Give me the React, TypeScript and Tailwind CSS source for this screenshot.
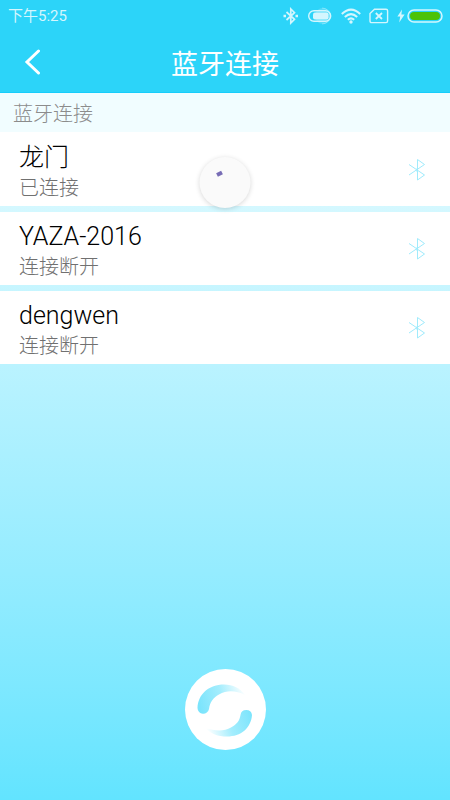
type Device = { name: string; status: string };

const devices: Device[] = [
  { name: "龙门", status: "已连接" },
  { name: "YAZA-2016", status: "连接断开" },
  { name: "dengwen", status: "连接断开" },
];

function StatusBar() {
  return (
    <div className="flex h-8 items-center justify-between pr-[7px] pl-2 text-[#d4f6fe]">
      <span className="text-[15px] leading-5">下午5:25</span>
      <div className="flex items-center">
        <svg width="16" height="18" viewBox="0 0 16 18" fill="none" stroke="currentColor" strokeWidth="1.7" aria-hidden="true">
          <path d="M3.5 5 L11.5 12.3 L7.8 16 V2 L11.5 5.7 L3.5 13" />
          <path d="M.5 9 h2.500 M12.500 9 h2.500" strokeWidth="2.4" />
        </svg>
        <svg className="ml-2" width="26" height="18" viewBox="0 0 26 18" fill="none" aria-hidden="true">
          <circle cx="16" cy="9" r="8" fill="#fff" opacity=".2" />
          <path d="M15 1 A8 8 0 0 1 15 17" stroke="#fff" opacity=".3" />
          <rect x="1.7" y="3.7" width="22" height="10.6" rx="5.3" stroke="currentColor" strokeWidth="1.4" />
          <rect x="6" y="5.5" width="15.5" height="7" rx="2" fill="currentColor" />
        </svg>
        <svg className="ml-2" width="20" height="16" viewBox="0 0 20 16" fill="none" stroke="currentColor" strokeWidth="2" aria-hidden="true">
          <path d="M.8 6 Q10 -2.8 19.2 6" />
          <path d="M3.8 9 Q10 3.3 16.2 9" />
          <path d="M6.8 11.7 Q10 9 13.2 11.7" />
          <circle cx="10" cy="14" r="1.7" fill="currentColor" stroke="none" />
        </svg>
        <svg className="ml-2" width="20" height="16" viewBox="0 0 20 16" fill="none" stroke="currentColor" strokeWidth="1.4" aria-hidden="true">
          <path d="M5.5 1.2 H17 Q18.6 1.2 18.6 2.8 V13 Q18.6 14.6 17 14.6 H2.6 Q1 14.6 1 13 V5.5 Z" />
          <path d="M6.8 5 L13 11 M13 5 L6.8 11" strokeWidth="1.8" />
        </svg>
        <svg className="ml-2" width="8" height="14" viewBox="0 0 8 14" fill="currentColor" aria-hidden="true">
          <path d="M5 0.5 L0.4 7.6 H3.2 L2.2 13.5 L7.6 5.6 H4.4 Z" />
        </svg>
        <svg className="ml-0.5" width="36" height="14" viewBox="0 0 36 14" aria-hidden="true">
          <rect x="1" y="1" width="34" height="12" rx="6" fill="none" stroke="currentColor" strokeWidth="1.5" />
          <rect x="3" y="3" width="30" height="8" rx="4" fill="#4cc208" />
        </svg>
      </div>
    </div>
  );
}

function BluetoothIcon() {
  return (
    <svg width="18" height="24" viewBox="0 0 18 24" fill="none" stroke="#a0ebfc" strokeWidth="1" aria-hidden="true">
      <path d="M1 6.5 L16.5 17 L9.5 22 V1.5 L16.5 6.5 L1 17" />
      <path d="M9 10.5 v3" strokeWidth="1.5" />
    </svg>
  );
}

function DeviceRow({ name, status }: Device) {
  return (
    <li>
      <button type="button" className="flex h-[73px] w-full items-center justify-between bg-white pr-6 pl-[19px] text-left">
        <span className="flex flex-col pt-1">
          <span className="text-[25px] leading-8 text-black">{name}</span>
          <span className="text-[20px] leading-7 text-[#707070]">{status}</span>
        </span>
        <BluetoothIcon />
      </button>
    </li>
  );
}

function RefreshIcon() {
  return (
    <svg width="81" height="81" viewBox="0 0 81 81" aria-hidden="true">
      <defs>
        <linearGradient id="swooshTop" x1="14" y1="36" x2="60" y2="22" gradientUnits="userSpaceOnUse">
          <stop offset="0" stopColor="#7be4fc" />
          <stop offset=".5" stopColor="#a3edfd" />
          <stop offset="1" stopColor="#fff" />
        </linearGradient>
        <linearGradient id="swooshBottom" x1="67" y1="45" x2="21" y2="59" gradientUnits="userSpaceOnUse">
          <stop offset="0" stopColor="#7be4fc" />
          <stop offset=".5" stopColor="#a3edfd" />
          <stop offset="1" stopColor="#fff" />
        </linearGradient>
      </defs>
      <circle cx="40.5" cy="40.5" r="40.5" fill="#fff" />
      <path d="M12.5 39 C13 25 24 15.5 39 15.5 C48 15.5 55 19 60 26 C51 21.500 42 21 34 25.500 C28 29 25 33 24 40 A5.800 5.800 0 0 1 12.500 39 Z" fill="url(#swooshTop)" />
      <path d="M67 46 C66 59 56 67.500 42 67.500 C33 67.500 26 65 20 59 C30 62 39 62.500 46 58.500 C52 55 54.500 52 55.500 46 A5.800 5.800 0 0 1 67 46 Z" fill="url(#swooshBottom)" />
    </svg>
  );
}

export default function App() {
  return (
    <div className="relative flex min-h-screen flex-col bg-linear-to-b from-[#f4feff] to-[#62e4ff] font-['Roboto','Noto_Sans_CJK_SC',sans-serif]">
      <header className="border-b border-[#17cdfb] bg-[#2cd4f9]">
        <StatusBar />
        <div className="grid h-[60px] grid-cols-[1fr_auto_1fr] items-center px-6">
          <button type="button" aria-label="返回" className="w-5">
            <svg width="18" height="26" viewBox="0 0 18 26" fill="none" stroke="#fff" strokeWidth="3" strokeLinecap="round" aria-hidden="true">
              <path d="M14.500 2 L3 13 L14.500 24" />
            </svg>
          </button>
          <h1 className="pt-1.5 text-[27px] leading-10 text-white">蓝牙连接</h1>
        </div>
      </header>
      <main className="flex grow flex-col font-light">
        <h2 className="bg-[#f1fdff] px-[13px] pt-[7px] pb-1 text-[20px] leading-7 text-[#8c8c8c]">蓝牙连接</h2>
        <ul className="flex flex-col gap-1.5 border-t border-white">
          {devices.map((d) => (
            <DeviceRow key={d.name} {...d} />
          ))}
        </ul>
        <div className="mt-auto flex justify-center pb-[50px]">
          <button type="button" aria-label="刷新" className="rounded-full">
            <RefreshIcon />
          </button>
        </div>
      </main>
      <div role="status" aria-label="加载中" className="absolute top-[157px] left-1/2 size-[51px] -translate-x-1/2 rounded-full bg-[#fafafa] shadow-[0_1px_5px_rgba(0,0,0,0.16)]">
        <svg width="51" height="51" viewBox="0 0 51 51" aria-hidden="true">
          <path d="M17.500 18 L22.500 15.500" stroke="#776cb5" strokeWidth="4" />
        </svg>
      </div>
    </div>
  );
}
